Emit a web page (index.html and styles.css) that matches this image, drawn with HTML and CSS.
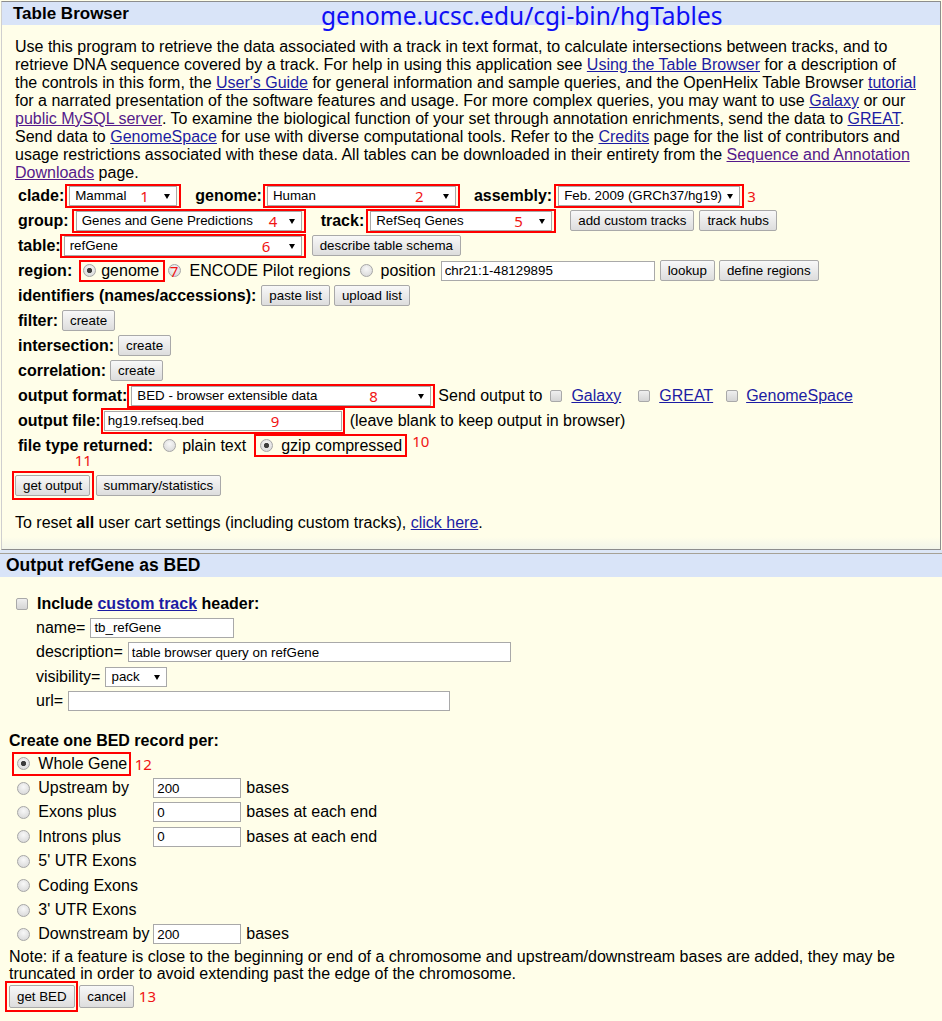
FILE: index.html
```html
<!DOCTYPE html>
<html lang="en">
<head>
<meta charset="utf-8">
<title>Table Browser</title>
<link rel="stylesheet" href="styles.css">
</head>
<body>
<div class="panel">
  <div class="panel-head">Table Browser<span class="url-note">genome.ucsc.edu/cgi-bin/hgTables</span></div>
  <div class="panel-body">
    <p class="intro">Use this program to retrieve the data associated with a track in text format, to calculate intersections between tracks, and to retrieve DNA sequence covered by a track. For help in using this application see <a href="#">Using the Table Browser</a> for a description of the controls in this form, the <a href="#">User's Guide</a> for general information and sample queries, and the OpenHelix Table Browser <a href="#">tutorial</a> for a narrated presentation of the software features and usage. For more complex queries, you may want to use <a href="#">Galaxy</a> or our <a href="#" class="visited">public MySQL server</a>. To examine the biological function of your set through annotation enrichments, send the data to <a href="#">GREAT</a>. Send data to <a href="#">GenomeSpace</a> for use with diverse computational tools. Refer to the <a href="#">Credits</a> page for the list of contributors and usage restrictions associated with these data. All tables can be downloaded in their entirety from the <a href="#" class="visited">Sequence and Annotation Downloads</a> page.</p>

    <div class="form">
      <div class="row">
        <b class="lbl">clade:</b>
        <span class="mark ml1"><span class="sel"><select class="w-clade"><option>Mammal</option></select></span><span class="num n1">1</span></span>
        <b class="lbl ml14">genome:</b>
        <span class="mark ml1"><span class="sel"><select class="w-genome"><option>Human</option></select></span><span class="num n2">2</span></span>
        <b class="lbl ml14">assembly:</b>
        <span class="mark ml2"><span class="sel"><select class="w-assembly"><option>Feb. 2009 (GRCh37/hg19)</option></select></span></span>
        <span class="num-inline ml3">3</span>
      </div>
      <div class="row">
        <b class="lbl">group:</b>
        <span class="mark ml3"><span class="sel"><select class="w-group"><option>Genes and Gene Predictions</option></select></span><span class="num n4">4</span></span>
        <b class="lbl ml15">track:</b>
        <span class="mark ml2"><span class="sel"><select class="w-track"><option>RefSeq Genes</option></select></span><span class="num n5">5</span></span>
        <button class="btn ml14" type="button">add custom tracks</button>
        <button class="btn ml5" type="button">track hubs</button>
      </div>
      <div class="row">
        <b class="lbl">table:</b>
        <span class="mark mlm1"><span class="sel"><select class="w-table"><option>refGene</option></select></span><span class="num n6">6</span></span>
        <button class="btn ml6" type="button">describe table schema</button>
      </div>
      <div class="row">
        <b class="lbl">region:</b>
        <span class="mark mark-region ml7"><input class="radio" type="radio" name="region" checked><span class="ml5">genome</span></span>
        <span class="r7 ml3"><input class="radio" type="radio" name="region"><span class="num n7">7</span></span>
        <span class="ml9">ENCODE Pilot regions</span>
        <input class="radio ml9" type="radio" name="region">
        <span class="ml8">position</span>
        <input class="txt w-pos ml5" type="text" value="chr21:1-48129895">
        <button class="btn ml5" type="button">lookup</button>
        <button class="btn ml4" type="button">define regions</button>
      </div>
      <div class="row">
        <b class="lbl">identifiers (names/accessions):</b>
        <button class="btn ml5" type="button">paste list</button>
        <button class="btn ml4" type="button">upload list</button>
      </div>
      <div class="row">
        <b class="lbl">filter:</b>
        <button class="btn ml4" type="button">create</button>
      </div>
      <div class="row">
        <b class="lbl">intersection:</b>
        <button class="btn ml4" type="button">create</button>
      </div>
      <div class="row">
        <b class="lbl">correlation:</b>
        <button class="btn ml4" type="button">create</button>
      </div>
      <div class="row">
        <b class="lbl">output format:</b>
        <span class="mark"><span class="sel"><select class="w-format"><option>BED - browser extensible data</option></select></span><span class="num n8">8</span></span>
        <span class="ml3">Send output to</span>
        <input class="check ml8" type="checkbox">
        <a href="#" class="ml9">Galaxy</a>
        <input class="check ml17" type="checkbox">
        <a href="#" class="ml9">GREAT</a>
        <input class="check ml13" type="checkbox">
        <a href="#" class="ml8">GenomeSpace</a>
      </div>
      <div class="row">
        <b class="lbl">output file:</b>
        <span class="mark mark-input"><input class="txt w-file" type="text" value="hg19.refseq.bed"><span class="num n9">9</span></span>
        <span class="ml5">(leave blank to keep output in browser)</span>
      </div>
      <div class="row">
        <b class="lbl">file type returned:</b>
        <input class="radio ml10" type="radio" name="ftype">
        <span class="ml6">plain text</span>
        <span class="mark mark-gzip ml8"><input class="radio" type="radio" name="ftype" checked><span class="ml8">gzip compressed</span><span class="num n10">10</span></span>
      </div>
    </div>

    <div class="actions">
      <span class="mark mark-btn"><button class="btn" type="button">get output</button><span class="num n11">11</span></span>
      <button class="btn ml2" type="button">summary/statistics</button>
    </div>

    <p class="reset">To reset <b>all</b> user cart settings (including custom tracks), <a href="#">click here</a>.</p>
  </div>
</div>

<div class="band"></div>
<div class="s2-head">Output refGene as BED</div>
<div class="s2-body">
  <div class="inc-row"><input class="check" type="checkbox"><b class="ml9">Include <a href="#">custom track</a> header:</b></div>
  <div class="kv"><span>name=</span><input class="txt w-name ml5" type="text" value="tb_refGene"></div>
  <div class="kv kv-tall"><span>description=</span><input class="txt w-desc ml5" type="text" value="table browser query on refGene"></div>
  <div class="kv"><span>visibility=</span><span class="sel ml5"><select class="w-vis"><option>pack</option></select></span></div>
  <div class="kv"><span>url=</span><input class="txt w-url ml5" type="text" value=""></div>

  <div class="create">Create one BED record per:</div>
  <div class="recs">
    <div class="rec"><span class="mark mark-whole"><input class="radio" type="radio" name="rec" checked><span class="ml8">Whole Gene</span><span class="num n12">12</span></span></div>
    <div class="rec"><input class="radio rad" type="radio" name="rec"><span class="rlabel">Upstream by</span><input class="txt w-bases" type="text" value="200"><span class="ml5">bases</span></div>
    <div class="rec"><input class="radio rad" type="radio" name="rec"><span class="rlabel">Exons plus</span><input class="txt w-bases" type="text" value="0"><span class="ml5">bases at each end</span></div>
    <div class="rec"><input class="radio rad" type="radio" name="rec"><span class="rlabel">Introns plus</span><input class="txt w-bases" type="text" value="0"><span class="ml5">bases at each end</span></div>
    <div class="rec"><input class="radio rad" type="radio" name="rec"><span class="rlabel">5' UTR Exons</span></div>
    <div class="rec"><input class="radio rad" type="radio" name="rec"><span class="rlabel">Coding Exons</span></div>
    <div class="rec"><input class="radio rad" type="radio" name="rec"><span class="rlabel">3' UTR Exons</span></div>
    <div class="rec"><input class="radio rad" type="radio" name="rec"><span class="rlabel">Downstream by</span><input class="txt w-bases" type="text" value="200"><span class="ml5">bases</span></div>
  </div>
  <p class="note">Note: if a feature is close to the beginning or end of a chromosome and upstream/downstream bases are added, they may be truncated in order to avoid extending past the edge of the chromosome.</p>
  <div class="s2-actions">
    <span class="mark mark-bed"><button class="btn btn-lg" type="button">get BED</button></span>
    <button class="btn btn-lg ml1" type="button">cancel</button>
    <span class="num-inline ml5">13</span>
  </div>
</div>
</body>
</html>
```

FILE: styles.css
```css
* { box-sizing: border-box; }
html, body { margin: 0; background: #fffee9; }
body {
  width: 942px;
  height: 1021px;
  overflow: hidden;
  font-family: "Liberation Sans", Arial, sans-serif;
  font-size: 16px;
  color: #000;
}
a { color: #1c1ca3; text-decoration: underline; }
a.visited { color: #551a8b; }

/* top panel */
.panel {
  margin: 1px 0 0 1px;
  width: 940px;
  border: 1px solid #8d8d8d;
  border-left-color: #cfcfcf;
  background: linear-gradient(to bottom, #fffee9 0, #fffee9 calc(100% - 12px), #f2f5ea 100%);
  padding-bottom: 17px;
}
.panel-head {
  position: relative;
  height: 23px;
  background: #d9e4f8;
  padding-left: 11px;
  font-weight: bold;
  font-size: 17px;
  line-height: 23px;
}
.url-note {
  position: absolute;
  left: 319px;
  top: 2px;
  font-family: "Noto Sans", sans-serif;
  font-weight: normal;
  font-size: 24.5px;
  line-height: 1;
  color: #0f0ff5;
  white-space: nowrap;
}
.panel-body { padding: 13px 0 0 13px; }
.intro { margin: 0; width: 906px; line-height: 18px; }

.form { margin-top: 1px; padding-left: 3px; }
.row {
  display: flex;
  align-items: center;
  height: 25px;
  white-space: nowrap;
}
.lbl { font-weight: bold; }

/* controls */
.btn {
  flex: none;
  height: 21px;
  margin: 0;
  padding: 0 7px;
  border: 1px solid #a9a9a9;
  border-radius: 2px;
  background: linear-gradient(#f8f8f8, #dddddd);
  font-family: "Liberation Sans", Arial, sans-serif;
  font-size: 13.33px;
  line-height: 19px;
  color: #000;
}
.btn-lg { height: 23px; line-height: 21px; }

.sel { position: relative; display: inline-flex; flex: none; }
.sel::after {
  content: "";
  position: absolute;
  right: 7px;
  top: 50%;
  margin-top: -2px;
  border-left: 3.5px solid transparent;
  border-right: 3.5px solid transparent;
  border-top: 5px solid #000;
  pointer-events: none;
}
.sel select {
  -webkit-appearance: none;
  appearance: none;
  height: 20px;
  margin: 0;
  padding: 0 0 0 5px;
  border: 1px solid #a9a9a9;
  border-radius: 0;
  background: #fff;
  font-family: "Liberation Sans", Arial, sans-serif;
  font-size: 13.33px;
  color: #000;
}
.w-clade { width: 108px; }
.w-genome { width: 189px; }
.w-assembly { width: 182px; }
.w-group { width: 226px; }
.w-track { width: 182px; }
.w-table { width: 238px; }
.w-format { width: 300px; }
.w-vis { width: 62px; }

.txt {
  flex: none;
  height: 20px;
  margin: 0;
  padding: 0 3px;
  border: 1px solid #a9a9a9;
  background: #fff;
  font-family: "Liberation Sans", Arial, sans-serif;
  font-size: 13.33px;
  color: #000;
}
.w-pos { width: 214px; }
.w-file { width: 238px; }
.w-name { width: 144px; }
.w-desc { width: 383px; }
.w-url { width: 382px; }
.w-bases { width: 88px; }

.radio {
  -webkit-appearance: none;
  appearance: none;
  flex: none;
  width: 13px;
  height: 13px;
  margin: 0;
  border: 1px solid #a6a6a6;
  border-radius: 50%;
  background: radial-gradient(circle at 50% 35%, #f8f8f8 0, #d9d9d9 85%);
}
.radio:checked {
  background:
    radial-gradient(circle, #3d3d3d 0, #3d3d3d 2.2px, rgba(61,61,61,0) 3px),
    radial-gradient(circle at 50% 35%, #f8f8f8 0, #d9d9d9 85%);
}
.check {
  -webkit-appearance: none;
  appearance: none;
  flex: none;
  width: 12px;
  height: 12px;
  margin: 0;
  border: 1px solid #a9a9a9;
  border-radius: 2px;
  background: linear-gradient(#efefef, #d5d5d5);
}

/* red annotation boxes and numbers */
.mark {
  position: relative;
  display: inline-flex;
  align-items: center;
  flex: none;
  border: 2px solid #ff0000;
  padding: 0 2px;
}
.mark-region { height: 22px; padding: 0 3.5px 0 2px; }
.mark-input { padding: 1px 1px; }
.mark-gzip { height: 23px; padding: 0 3px 0 4px; }
.mark-btn { padding: 2px 1.3px; }
.mark-whole { height: 24px; padding: 0 1.5px 0 3.6px; }
.mark-bed { padding: 2px 1.7px 2px 2.2px; }

.num {
  position: absolute;
  top: 50%;
  margin-top: -10px;
  font-family: "Noto Sans", sans-serif;
  font-size: 15px;
  line-height: 20px;
  color: #f01414;
  pointer-events: none;
}
.num-inline {
  font-family: "Noto Sans", sans-serif;
  font-size: 15px;
  line-height: 20px;
  color: #f01414;
}
.n1 { left: 73px; }
.n2 { left: 150px; }
.n4 { left: 195px; }
.n5 { left: 146px; }
.n6 { left: 200px; }
.n8 { left: 240px; }
.n9 { left: 168px; }
.n10 { left: 156px; top: -5px; margin-top: 0; }
.n11 { left: 61px; top: -23px; margin-top: 0; }
.n12 { left: 121px; }
.r7 { position: relative; display: inline-flex; flex: none; }
.n7 { left: 0; width: 13px; text-align: center; }

.actions {
  display: flex;
  align-items: center;
  margin: 13px 0 0 -3.3px;
}
.reset { margin: 13.5px 0 0; line-height: 18px; }

/* output section */
.band { height: 3px; background: #dce6f6; }
.s2-head {
  height: 24px;
  border-top: 1px solid #a6a196;
  background: #d9e4f8;
  padding-left: 6px;
  font-weight: bold;
  font-size: 17.5px;
  line-height: 23px;
}
.s2-body { padding: 15px 0 0 9px; }
.inc-row {
  display: flex;
  align-items: center;
  height: 24px;
  padding-left: 7px;
}
.kv {
  display: flex;
  align-items: center;
  height: 24px;
  padding-left: 27px;
}
.kv-tall { height: 25px; }
.create {
  margin-top: 16px;
  height: 23px;
  line-height: 23px;
  font-weight: bold;
}
.rec {
  display: flex;
  align-items: center;
  height: 24.4px;
  white-space: nowrap;
}
.rad { margin-left: 8.3px; }
.rlabel { margin-left: 8px; width: 115px; flex: none; }
.note { margin: 1px 0 0; line-height: 17px; }
.s2-actions {
  display: flex;
  align-items: center;
  margin: -1px 0 0 -4.2px;
}

/* spacing helpers (last, so they win over control resets) */
.ml1 { margin-left: 1px; }
.ml2 { margin-left: 2px; }
.ml3 { margin-left: 3px; }
.ml4 { margin-left: 4px; }
.ml5 { margin-left: 5px; }
.ml6 { margin-left: 6px; }
.ml7 { margin-left: 7px; }
.ml8 { margin-left: 8px; }
.ml9 { margin-left: 9px; }
.ml10 { margin-left: 10px; }
.ml13 { margin-left: 13px; }
.ml14 { margin-left: 14px; }
.ml15 { margin-left: 15px; }
.ml17 { margin-left: 17px; }
.mlm1 { margin-left: -1px; }
.mark-whole { margin-left: 2.7px; }
```
